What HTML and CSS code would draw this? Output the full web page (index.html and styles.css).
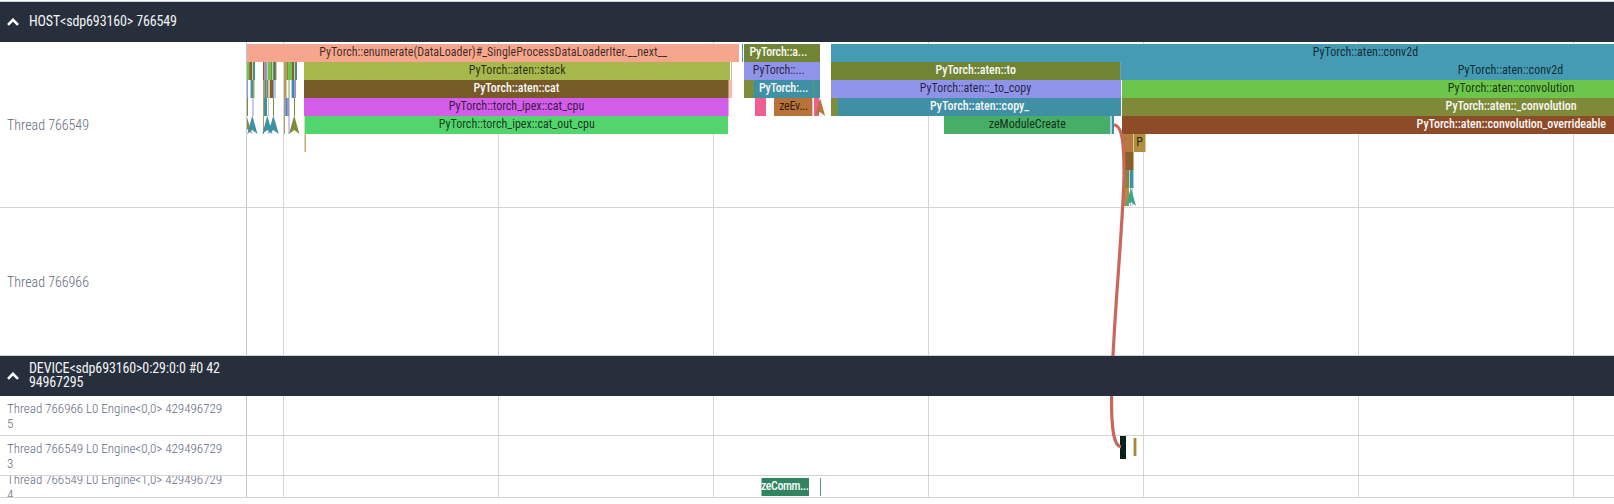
FILE: index.html
```html
<!DOCTYPE html>
<html lang="en">
<head>
<meta charset="utf-8">
<title>Trace timeline</title>
<link rel="stylesheet" href="styles.css">
</head>
<body>
<main class="timeline">
  <svg class="grid" viewBox="0 0 1614 498" shape-rendering="crispEdges">
    <path class="axis" d="M246.5 42V498"/>
    <path d="M283.5 42V498M498.5 42V498M713.5 42V498M928.5 42V498M1143.5 42V498M1358.5 42V498M1573.5 42V498"/>
  </svg>

  <header class="group">
    <svg class="chevron" viewBox="0 0 12 8"><path d="M1 6.8 6 1.8 11 6.8"/></svg>
    <h1>HOST&lt;sdp693160&gt; 766549</h1>
  </header>

  <section class="track main-thread">
    <div class="label">Thread 766549</div>
    <svg class="slices" viewBox="246 42 1368 165">
      <g shape-rendering="crispEdges">
        <rect x="247" y="44" width="492" height="18" fill="#f6a68f"/>
        <rect x="742" y="44" width="1" height="18" fill="#459bb4"/>
        <rect x="744" y="44" width="76" height="18" fill="#718433"/>
        <rect x="831" y="44" width="783" height="18" fill="#459bb4"/>

        <rect x="304" y="62" width="426" height="18" fill="#a7b94d"/>
        <rect x="731" y="62" width="1" height="18" fill="#d3b58c"/>
        <rect x="744" y="62" width="76" height="18" fill="#9093ea"/>
        <rect x="831" y="62" width="289" height="18" fill="#718433"/>
        <rect x="1121" y="62" width="493" height="18" fill="#459bb4"/>
        <rect x="1120" y="62" width="1" height="18" fill="#6aa3a5"/>

        <rect x="304" y="80" width="424" height="18" fill="#765a27"/>
        <rect x="728" y="80" width="1" height="18" fill="#b9946e"/>
        <rect x="729" y="80" width="3" height="18" fill="#fab7b4"/>
        <rect x="744" y="80" width="9" height="18" fill="#7f8d38"/>
        <rect x="753" y="80" width="1" height="18" fill="#69935c"/>
        <rect x="754" y="80" width="66" height="18" fill="#4090a5"/>
        <rect x="813" y="80" width="1" height="18" fill="#6f9257"/>
        <rect x="831" y="80" width="290" height="18" fill="#9093ea"/>
        <rect x="1122" y="80" width="492" height="18" fill="#6bc64b"/>

        <rect x="304" y="98" width="424" height="18" fill="#d35de9"/>
        <rect x="728" y="98" width="1" height="18" fill="#e8a8f0"/>
        <rect x="755" y="98" width="11" height="18" fill="#ef5f90"/>
        <rect x="774" y="98" width="38" height="18" fill="#b97338"/>
        <rect x="812" y="98" width="1" height="18" fill="#e5c2a8"/>
        <rect x="814" y="98" width="5" height="18" fill="#ef5f90"/>
        <rect x="831" y="98" width="6" height="18" fill="#7f8d38"/>
        <rect x="837" y="98" width="1" height="18" fill="#69935c"/>
        <rect x="838" y="98" width="283" height="18" fill="#4090a5"/>
        <rect x="1122" y="98" width="492" height="18" fill="#7f8a38"/>

        <rect x="304" y="116" width="1" height="18" fill="#b8ecc2"/>
        <rect x="305" y="116" width="423" height="18" fill="#53d56e"/>
        <rect x="944" y="116" width="166" height="18" fill="#46ae66"/>
        <rect x="1110" y="116" width="2" height="18" fill="#a9d2e8"/>
        <rect x="1112" y="116" width="2" height="18" fill="#4090a5"/>
        <rect x="1122" y="116" width="492" height="18" fill="#8e4b28"/>

        <rect x="304" y="134" width="1" height="18" fill="#e3d3b2"/>
        <rect x="305" y="134" width="1" height="18" fill="#c9ae7c"/>
        <rect x="1123" y="134" width="10" height="18" fill="#b47a3b"/>
        <rect x="1133" y="134" width="1" height="18" fill="#dcc49c"/>
        <rect x="1134" y="134" width="11" height="18" fill="#b08e40"/>
        <rect x="1145" y="134" width="1" height="18" fill="#d9c89f"/>
        <rect x="1124" y="152" width="9" height="18" fill="#8a602a"/>
        <rect x="1133" y="152" width="1" height="18" fill="#c5af94"/>
        <rect x="1124" y="170" width="5" height="18" fill="#7f8838"/>
        <rect x="1129" y="170" width="1" height="18" fill="#a9d2e8"/>
        <rect x="1130" y="170" width="3" height="18" fill="#4090a5"/>
        <rect x="1133" y="170" width="1" height="18" fill="#a9cfd8"/>
        <rect x="1124" y="188" width="5" height="18" fill="#b08e40"/>
        <rect x="1130" y="188" width="1" height="18" fill="#8fb4ee"/>
        <rect x="1132" y="188" width="1" height="18" fill="#a9d2e8"/>
      </g>

      <!-- very short calls at the start of the trace -->
      <g shape-rendering="crispEdges">
        <path fill="#6bc64b" d="M247 62h2v18h-2zM268 62h3v18h-3zM288 62h4v18h-4z"/>
        <path fill="#8a602a" d="M250 62h2v18h-2zM274 62h1v18h-1zM292 62h2v18h-2zM270 80h3v18h-3zM263 62h1v18h-1z"/>
        <path fill="#7f8d38" d="M249 62h1v18h-1zM271 62h1v18h-1zM287 62h1v18h-1zM273 62h1v18h-1zM247 98h1v18h-1zM273 98h1v18h-1zM294 98h1v18h-1zM267 80h1v18h-1z"/>
        <path fill="#4a8d8c" d="M253 62h2v18h-2zM275 62h1v18h-1zM295 62h2v18h-2z"/>
        <path fill="#4090a5" d="M251 80h2v18h-2zM265 80h1v18h-1zM292 80h2v18h-2zM264 98h3v18h-3zM286 98h1v18h-1z"/>
        <path fill="#9093ea" d="M247 80h1v18h-1zM265 62h2v18h-2zM266 80h1v18h-1zM294 80h1v18h-1zM285 98h1v18h-1zM287 98h2v18h-2z"/>
        <path fill="#b59a62" d="M264 62h1v18h-1zM284 62h3v18h-3zM253 80h1v18h-1zM263 80h2v18h-2zM284 80h2v18h-2zM263 98h1v36h-1zM284 98h1v36h-1z"/>
        <path fill="#cbd0a4" d="M252 62h1v18h-1zM267 62h1v18h-1zM276 62h1v18h-1zM294 62h1v18h-1zM254 80h1v18h-1zM268 80h2v18h-2zM288 80h2v18h-2zM268 98h1v18h-1zM289 98h1v18h-1zM286 80h1v18h-1z"/>
        <path fill="#a9d2e8" d="M250 80h1v18h-1zM274 80h2v18h-2zM291 80h1v18h-1zM272 62h1v18h-1z"/>
        <path fill="#c9c9f7" d="M252 98h2v18h-2zM288 116h2v18h-2z"/>
        <path fill="#a98bc6" d="M273 80h1v18h-1zM295 80h1v18h-1z"/>
      </g>

      <!-- instant events -->
      <path fill="#7f8d38" d="M247 117 252 134 247 129z"/>
      <path fill="#4090a5" d="M252.3 115.5 257.5 134 252.3 130 247.3 134zM267.3 115.5 272.5 134 267.3 130 262.3 134zM273.3 115.5 278.8 134 273.3 130 268 134z"/>
      <path fill="#7f8d38" d="M294.2 115.5 299.4 134 294.2 130 289 134z"/>
      <path fill="#b97338" d="M820 98 825.2 116 820 112 815 116z"/>
      <path fill="#3fa68c" d="M1131 188 1136 206 1131 202 1125.5 206z"/>

      <g class="name" transform="translate(0.2 0)">
        <text x="319" y="56" textLength="348">PyTorch::enumerate(DataLoader)#_SingleProcessDataLoaderIter.__next__</text>
        <text x="468.6" y="74" textLength="96.8">PyTorch::aten::stack</text>
        <text x="448.6" y="110" textLength="135.5">PyTorch::torch_ipex::cat_cpu</text>
        <text x="438.6" y="128" textLength="156">PyTorch::torch_ipex::cat_out_cpu</text>
        <text x="752.6" y="74" textLength="52">PyTorch::...</text>
        <text x="779" y="110" textLength="29">zeEv...</text>
        <text x="919.6" y="92" textLength="111.4">PyTorch::aten::_to_copy</text>
        <text x="988.6" y="128" textLength="77">zeModuleCreate</text>
        <text x="1312.6" y="56" textLength="105.4">PyTorch::aten::conv2d</text>
        <text x="1457.6" y="74" textLength="105.4">PyTorch::aten::conv2d</text>
        <text x="1447.6" y="92" textLength="126.4">PyTorch::aten::convolution</text>
        <text x="1136" y="146">P</text>
      </g>
      <g class="name light">
        <text x="473.4" y="92" textLength="86">PyTorch::aten::cat</text>
        <text x="749.4" y="56" textLength="58">PyTorch::a...</text>
        <text x="759" y="92" textLength="49.4">PyTorch:...</text>
        <text x="935.4" y="74" textLength="80.6">PyTorch::aten::to</text>
        <text x="930" y="110" textLength="99">PyTorch::aten::copy_</text>
        <text x="1445.6" y="110" textLength="131">PyTorch::aten::_convolution</text>
        <text x="1416.6" y="128" textLength="189.4">PyTorch::aten::convolution_overrideable</text>
      </g>
    </svg>
  </section>

  <section class="track worker-thread">
    <div class="label">Thread 766966</div>
  </section>

  <header class="group">
    <svg class="chevron" viewBox="0 0 12 8"><path d="M1 6.8 6 1.8 11 6.8"/></svg>
    <h1>DEVICE&lt;sdp693160&gt;0:29:0:0 #0 42<br>94967295</h1>
  </header>

  <section class="track engine">
    <div class="label">Thread 766966 L0 Engine&lt;0,0&gt; 429496729<br>5</div>
  </section>

  <section class="track engine">
    <div class="label">Thread 766549 L0 Engine&lt;0,0&gt; 429496729<br>3</div>
    <svg class="slices" viewBox="246 436 1368 39" shape-rendering="crispEdges">
      <rect x="1120" y="436" width="6" height="23" fill="#06231b"/>
      <rect x="1133" y="438" width="4" height="18" fill="#dccfa8"/>
      <rect x="1134" y="438" width="2" height="18" fill="#a6893c"/>
    </svg>
  </section>

  <section class="track engine-last">
    <div class="label">Thread 766549 L0 Engine&lt;1,0&gt; 429496729<br>4</div>
    <svg class="slices" viewBox="246 476 1368 21">
      <rect x="761.5" y="478" width="47.5" height="18" fill="#30845f"/>
      <rect x="820" y="478" width="1" height="18" fill="#4f987b"/>
      <text class="name light" x="761" y="490" textLength="48">zeComm...</text>
    </svg>
  </section>

  <svg class="flow" viewBox="0 0 1614 498">
    <path d="M1114 125C1124 125 1124 155 1124 175C1123 230 1111.5 340 1111.5 400C1111.5 430 1114 446 1121 447"/>
  </svg>
</main>
</body>
</html>
```
FILE: styles.css
```css
body {
  margin: 0;
  background: #fff;
  font-family: "Roboto Condensed", Roboto, sans-serif;
}

.timeline {
  position: relative;
  width: 1614px;
  height: 498px;
  padding-top: 2px;
  box-sizing: border-box;
  background: linear-gradient(#fbfcfd 0 1px, #ccd5df 1px 2px, transparent 2px);
}

.grid,
.flow {
  position: absolute;
  top: 0;
  left: 0;
  width: 1614px;
  height: 498px;
  fill: none;
}

.grid { stroke: #d6d6d6; }
.grid .axis { stroke: #bcc8d8; }

.flow {
  z-index: 1;
  stroke: #c9685a;
  stroke-width: 3.2;
}

.group {
  position: relative;
  z-index: 2;
  display: flex;
  align-items: center;
  gap: 10px;
  height: 40px;
  padding-left: 7px;
  box-sizing: border-box;
  background: #272f3c;
  color: #f1f3f5;
}

.group h1 {
  margin: 0;
  padding-bottom: 2px;
  font-size: 14px;
  font-weight: 400;
  letter-spacing: -0.13px;
  line-height: 14px;
}

.chevron {
  width: 12px;
  height: 8px;
  fill: none;
  stroke: #fff;
  stroke-width: 2.6;
}

.track {
  position: relative;
  display: flex;
  box-sizing: border-box;
  border-bottom: 1px solid #d4d4d4;
  overflow: hidden;
}

.main-thread { height: 166px; }
.worker-thread { height: 148px; }
.engine { height: 40px; }
.engine-last { height: 22px; }

.label {
  display: flex;
  align-items: center;
  flex: 0 0 239px;
  padding-left: 7px;
  color: #5f6b7a;
  font-size: 13px;
  font-weight: 300;
  line-height: 15px;
  white-space: nowrap;
}

.main-thread .label,
.worker-thread .label {
  padding-top: 2px;
  font-size: 14px;
}

.slices {
  flex: 0 0 1368px;
  width: 1368px;
  height: 100%;
}

.name {
  font-size: 12px;
  fill: rgba(0, 0, 0, 0.75);
}

.light {
  fill: #f7f7f7;
  font-weight: 500;
}
```
